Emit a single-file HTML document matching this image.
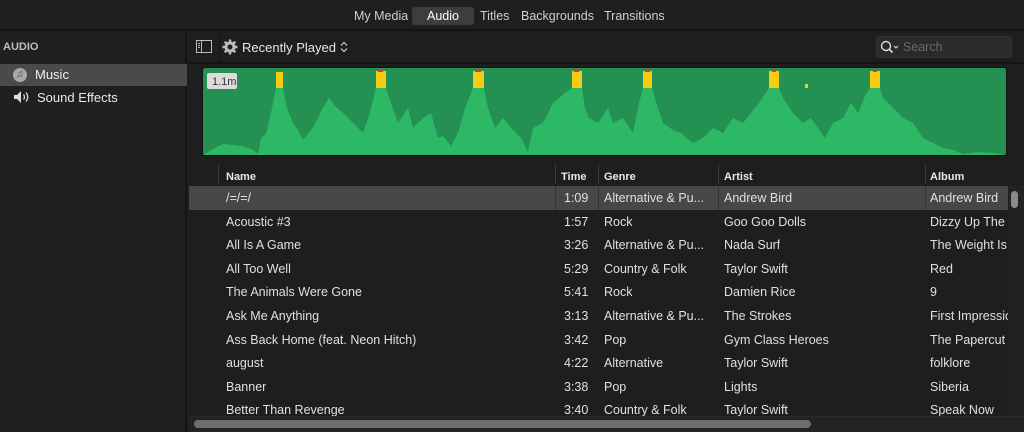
<!DOCTYPE html>
<html><head><meta charset="utf-8"><style>
*{margin:0;padding:0;box-sizing:border-box}
body{width:1024px;height:432px;background:#1e1e1e;font-family:"Liberation Sans",sans-serif;color:#dcdcdc;position:relative;overflow:hidden}
.abs{position:absolute}
.top{left:0;top:0;width:1024px;height:31px;background:#1f1f1f;border-bottom:2px solid #141414}
.tab{top:9px;font-size:12.5px;color:#cfcfcf}
.side{left:0;top:33px;width:187px;height:399px;background:#202020;border-right:2px solid #141414}
.main{left:189px;top:33px;width:835px;height:399px;background:#1e1e1e}
.row{position:absolute;left:189px;width:821px;height:23.6px;font-size:12.5px;color:#e0e0e0}
.row span{position:absolute;top:5px;white-space:nowrap;overflow:hidden}
.hdr span{position:absolute;top:7px;font-size:11px;font-weight:bold;color:#e8e8e8}
.sep{position:absolute;top:164px;width:1px;height:20px;background:#3a3a3a}
</style></head><body>
<div class="abs top"></div>
<div class="abs tab" style="left:354px">My Media</div>
<div class="abs" style="left:412px;top:7px;width:62px;height:18px;background:#3d3d3d;border-radius:3px"></div>
<div class="abs tab" style="left:427px;color:#fff">Audio</div>
<div class="abs tab" style="left:480px">Titles</div>
<div class="abs tab" style="left:521px">Backgrounds</div>
<div class="abs tab" style="left:604px">Transitions</div>

<div class="abs side"></div>
<div class="abs" style="left:3px;top:41px;font-size:11px;font-weight:bold;color:#bdbdbd">AUDIO</div>
<div class="abs" style="left:0;top:64px;width:187px;height:22px;background:#4a4a4a"></div>
<div class="abs" style="left:13px;top:68px;width:14px;height:14px;border-radius:50%;background:#a8a8a8;color:#4a4a4a;font-size:10px;text-align:center;line-height:14px">♫</div>
<div class="abs" style="left:35px;top:67px;font-size:13px;color:#eee">Music</div>
<svg class="abs" style="left:13px;top:90px" width="18" height="14" viewBox="0 0 18 14"><path d="M1 5h3l4-4v12l-4-4H1z" fill="#ddd"/><path d="M10.5 4.5q2 2.5 0 5M13 2.5q3.5 4.5 0 9" stroke="#ddd" stroke-width="1.3" fill="none"/></svg>
<div class="abs" style="left:37px;top:90px;font-size:13px;color:#e8e8e8">Sound Effects</div>

<div class="abs main"></div>
<div class="abs" style="left:189px;top:62px;width:835px;height:2px;background:#141414"></div>
<div class="abs" style="left:219px;top:33px;width:1px;height:29px;background:#141414"></div>
<svg class="abs" style="left:196px;top:40px" width="16" height="13"><rect x="0.5" y="0.5" width="15" height="12" fill="none" stroke="#bbb"/><line x1="5.5" y1="1" x2="5.5" y2="12" stroke="#bbb"/><path d="M2 3.5h2M2 5.5h2M2 7.5h2" stroke="#bbb"/></svg>
<svg class="abs" style="left:222px;top:39px" width="16" height="16" viewBox="0 0 16 16"><g fill="#bbb"><circle cx="8" cy="8" r="5.5"/><g stroke="#bbb" stroke-width="2.5"><path d="M8 0.5v3M8 12.5v3M0.5 8h3M12.5 8h3M2.7 2.7l2.1 2.1M11.2 11.2l2.1 2.1M2.7 13.3l2.1-2.1M11.2 4.8l2.1-2.1"/></g></g><circle cx="8" cy="8" r="2.5" fill="#1e1e1e"/></svg>
<div class="abs" style="left:242px;top:40px;font-size:13px;color:#e8e8e8">Recently Played</div>
<svg class="abs" style="left:340px;top:41px" width="8" height="12"><path d="M1 4.5l3-3 3 3M1 7.5l3 3 3-3" stroke="#ccc" stroke-width="1.2" fill="none"/></svg>
<div class="abs" style="left:876px;top:36px;width:136px;height:22px;background:#2a2a2a;border-radius:4px;border:1px solid #333"></div>
<svg class="abs" style="left:880px;top:40px" width="20" height="14"><circle cx="6" cy="6" r="4.5" stroke="#ddd" stroke-width="1.4" fill="none"/><path d="M9.2 9.2l3.3 3.3" stroke="#ddd" stroke-width="1.6"/><path d="M14 6l2 2 2-2" stroke="#ddd" stroke-width="1.1" fill="none"/></svg>
<div class="abs" style="left:903px;top:40px;font-size:12.5px;color:#6a6a6a">Search</div>

<svg class="abs" style="left:202px;top:67px" width="805" height="89" viewBox="-1 -1 805 89">
<rect x="-1" y="-1" width="805" height="89" fill="#141414"/>
<rect x="0" y="0" width="803" height="87" rx="2" fill="#249051"/>
<g fill="#f5cc12"><rect x="73" y="4" width="7" height="16"/><rect x="173" y="3" width="10" height="17"/><rect x="270" y="3" width="11" height="17"/><rect x="369" y="3" width="10" height="17"/><rect x="440" y="3" width="9" height="17"/><rect x="566" y="3" width="10" height="17"/><rect x="667" y="3" width="10" height="17"/><rect x="602" y="16" width="3" height="4"/></g>
<g fill="#e5342a"><rect x="175" y="1" width="5" height="3"/><rect x="272" y="1" width="6" height="3"/><rect x="371" y="1" width="5" height="3"/><rect x="442" y="1" width="5" height="3"/><rect x="569" y="1" width="4" height="3"/><rect x="670" y="1" width="4" height="3"/></g>
<polygon fill="#2db866" points="0,87 5,84 12,80 20,76 30,77 40,78 50,82 55,86 58,70 63,66 68,45 73,20 80,20 84,40 90,55 95,62 100,72 110,60 120,40 126,30 132,38 140,45 150,55 160,65 166,48 173,20 183,20 188,35 195,55 205,40 210,60 220,50 228,45 235,70 240,68 248,78 255,65 262,40 270,20 281,20 285,40 292,60 300,50 310,62 318,70 325,84 330,60 340,55 350,35 362,25 369,20 379,20 382,40 386,50 395,55 405,40 410,55 420,50 430,65 436,35 440,20 449,20 455,40 460,55 470,62 478,65 490,75 500,70 510,60 520,65 530,50 540,55 548,45 556,35 566,20 576,20 580,30 590,45 600,55 608,50 615,60 622,70 630,55 640,50 648,35 655,45 662,28 667,20 677,20 680,30 690,40 700,50 710,55 720,70 730,75 740,80 750,82 760,86 775,84 790,85 803,87"/>
<rect x="4" y="5" width="30" height="16" rx="2" fill="#dcdcdc"/>
<text x="9" y="17" font-family="Liberation Sans" font-size="11" fill="#333">1.1m</text>
</svg>

<div class="abs" style="left:189px;top:157px;width:835px;height:7px;background:#1e1e1e"></div>
<div class="sep" style="left:218px"></div><div class="sep" style="left:555px"></div><div class="sep" style="left:598px"></div><div class="sep" style="left:718px"></div><div class="sep" style="left:925px"></div>
<div class="row hdr" style="top:164px"><span style="left:37px">Name</span><span style="left:372px">Time</span><span style="left:415px">Genre</span><span style="left:535px">Artist</span><span style="left:741px">Album</span></div>
<div class="abs" style="left:189px;top:186px;width:821px;height:24px;background:#474747"></div>
<div class="abs" style="left:555px;top:186px;width:1px;height:24px;background:#333"></div>
<div class="abs" style="left:598px;top:186px;width:1px;height:24px;background:#333"></div>
<div class="abs" style="left:718px;top:186px;width:1px;height:24px;background:#333"></div>
<div class="abs" style="left:925px;top:186px;width:1px;height:24px;background:#333"></div>
<div id="rows"></div>
<div class="row" style="top:186px"><span style="left:37px">/=/=/</span><span style="left:375px">1:09</span><span style="left:415px">Alternative &amp; Pu...</span><span style="left:535px">Andrew Bird</span><span style="left:741px;width:78px">Andrew Bird</span></div>
<div class="row" style="top:209.6px"><span style="left:37px">Acoustic #3</span><span style="left:375px">1:57</span><span style="left:415px">Rock</span><span style="left:535px">Goo Goo Dolls</span><span style="left:741px;width:78px">Dizzy Up The Girl</span></div>
<div class="row" style="top:233.2px"><span style="left:37px">All Is A Game</span><span style="left:375px">3:26</span><span style="left:415px">Alternative &amp; Pu...</span><span style="left:535px">Nada Surf</span><span style="left:741px;width:78px">The Weight Is</span></div>
<div class="row" style="top:256.8px"><span style="left:37px">All Too Well</span><span style="left:375px">5:29</span><span style="left:415px">Country &amp; Folk</span><span style="left:535px">Taylor Swift</span><span style="left:741px;width:78px">Red</span></div>
<div class="row" style="top:280.4px"><span style="left:37px">The Animals Were Gone</span><span style="left:375px">5:41</span><span style="left:415px">Rock</span><span style="left:535px">Damien Rice</span><span style="left:741px;width:78px">9</span></div>
<div class="row" style="top:304px"><span style="left:37px">Ask Me Anything</span><span style="left:375px">3:13</span><span style="left:415px">Alternative &amp; Pu...</span><span style="left:535px">The Strokes</span><span style="left:741px;width:78px">First Impressions</span></div>
<div class="row" style="top:327.6px"><span style="left:37px">Ass Back Home (feat. Neon Hitch)</span><span style="left:375px">3:42</span><span style="left:415px">Pop</span><span style="left:535px">Gym Class Heroes</span><span style="left:741px;width:78px">The Papercut</span></div>
<div class="row" style="top:351.2px"><span style="left:37px">august</span><span style="left:375px">4:22</span><span style="left:415px">Alternative</span><span style="left:535px">Taylor Swift</span><span style="left:741px;width:78px">folklore</span></div>
<div class="row" style="top:374.8px"><span style="left:37px">Banner</span><span style="left:375px">3:38</span><span style="left:415px">Pop</span><span style="left:535px">Lights</span><span style="left:741px;width:78px">Siberia</span></div>
<div class="row" style="top:398.4px"><span style="left:37px">Better Than Revenge</span><span style="left:375px">3:40</span><span style="left:415px">Country &amp; Folk</span><span style="left:535px">Taylor Swift</span><span style="left:741px;width:78px">Speak Now</span></div>
<div class="abs" style="left:1008px;top:186px;width:16px;height:230px;background:#222"></div>
<div class="abs" style="left:1011px;top:191px;width:7px;height:17px;border-radius:4px;background:#8a8a8a"></div>
<div class="abs" style="left:189px;top:416px;width:835px;height:16px;background:#232323;border-top:1px solid #2c2c2c"></div>
<div class="abs" style="left:194px;top:420px;width:617px;height:8px;border-radius:4px;background:#6e6e6e"></div>
</body></html>
